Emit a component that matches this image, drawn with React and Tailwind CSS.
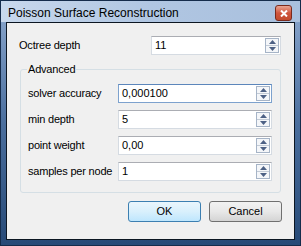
import React from "react";

const font = { fontFamily: '"Liberation Sans", Arial, sans-serif' };

const SpinBox = ({ value, width, focused }) => (
  <div
    className={`flex items-center h-[19px] bg-white border ${
      focused ? "border-[#7da2ce] border-t-[#5c86bb]" : "border-[#d5dbe2] border-t-[#abadb3]"
    }`}
    style={{ width }}
  >
    <span className="flex-1 pl-[3px] text-[11px] leading-[17px] text-black">{value}</span>
    <div className="flex flex-col w-[14px] h-[15px] mr-[1px] border border-[#a6b4c7] bg-[#f4f6f9]">
      <div className="flex-1 flex items-center justify-center border-b border-[#c3cbd6]">
        <svg width="7" height="4" viewBox="0 0 7 4">
          <path d="M3.5 0 L7 4 L0 4 Z" fill="#4d6185" />
        </svg>
      </div>
      <div className="flex-1 flex items-center justify-center">
        <svg width="7" height="4" viewBox="0 0 7 4">
          <path d="M0 0 L7 0 L3.5 4 Z" fill="#4d6185" />
        </svg>
      </div>
    </div>
  </div>
);

const Row = ({ label, value, focused }) => (
  <div className="flex items-center h-[19px]">
    <span className="w-[90px] text-[11px] tracking-[-0.2px] text-black">{label}</span>
    <SpinBox value={value} width={154} focused={focused} />
  </div>
);

export default function App() {
  return (
    <div
      className="w-[301px] h-[246px] flex flex-col border border-[#152c4b] bg-gradient-to-b from-[#8eaad0] via-[#4b6f9e] to-[#274a77] px-[5px] pb-[5px]"
      style={font}
    >
      <div className="h-[21px] flex items-start justify-between bg-gradient-to-r from-[#c8d8ec] via-[#b0c6e2] to-[#a9c0dd] -mx-[5px] px-[7px]">
        <span className="mt-[4px] text-[12px] leading-[16px] text-black">Poisson Surface Reconstruction</span>
        <div className="mt-[4px] mr-[1px] w-[17px] h-[16px] rounded-[3px] border border-[#7a2a1c] bg-gradient-to-b from-[#e8a493] via-[#d0553c] to-[#c24a2c] flex items-center justify-center">
          <svg width="8" height="7" viewBox="0 0 8 7">
            <path d="M1 0.5 L7 6.5 M7 0.5 L1 6.5" stroke="#fff" strokeWidth="2" />
          </svg>
        </div>
      </div>
      <div className="flex-1 border border-[#0c1622] bg-[#f0f0f0]">
        <div className="flex flex-col pt-[13px] pl-[12px] pr-[13px]">
          <div className="flex items-center justify-between h-[19px]">
            <span className="text-[11px] tracking-[-0.2px] text-black">Octree depth</span>
            <SpinBox value="11" width={130} />
          </div>
          <fieldset className="ml-[1px] mt-[8px] w-[261px] border border-[#d5dfe5] rounded-[3px] pl-[7px] pr-[6px] pb-[11px]">
            <legend className="px-[1px] -ml-[1px] text-[11px] leading-[13px] tracking-[-0.2px] text-black">Advanced</legend>
            <div className="flex flex-col gap-[7px] mt-[8px]">
              <Row label="solver accuracy" value="0,000100" focused />
              <Row label="min depth" value="5" />
              <Row label="point weight" value="0,00" />
              <Row label="samples per node" value="1" />
            </div>
          </fieldset>
          <div className="flex justify-end gap-[8px] mt-[8px]">
            <button className="w-[73px] h-[21px] rounded-[3px] border border-[#3c7fb1] bg-gradient-to-b from-[#eaf6fd] via-[#d9f0fc] to-[#bee6fd] text-[11px] text-black">
              OK
            </button>
            <button className="w-[73px] h-[21px] rounded-[3px] border border-[#707070] bg-gradient-to-b from-[#f2f2f2] via-[#e8e8e8] to-[#d4d4d4] text-[11px] text-black -mr-[1px]">
              Cancel
            </button>
          </div>
        </div>
      </div>
    </div>
  );
}
